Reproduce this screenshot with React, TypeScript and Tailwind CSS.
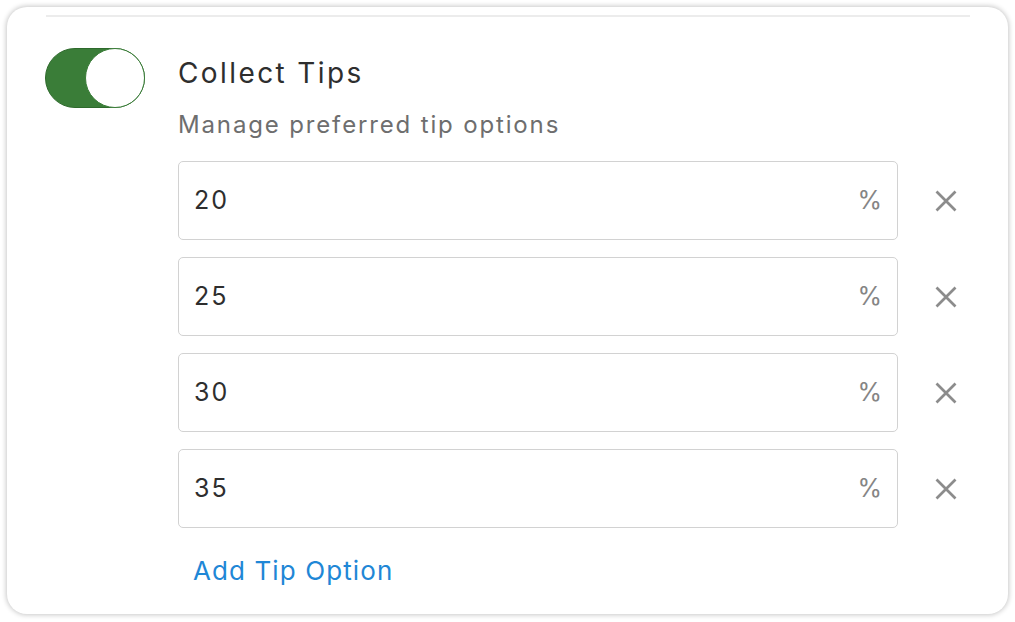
import React from "react";

const tips = ["20", "25", "30", "35"];

function CloseIcon() {
  return (
    <svg width="22" height="22" viewBox="0 0 22 22" fill="none" aria-hidden="true">
      <path d="M1.5 1.5 L20.5 20.5 M20.5 1.5 L1.5 20.5" stroke="#8c8c8c" strokeWidth="2.7" strokeLinecap="butt" />
    </svg>
  );
}

export default function App() {
  return (
    <div
      className="w-[1015px] h-[622px] bg-white pt-[7px] px-[7px]"
      style={{ fontFamily: "Inter, 'Open Sans', sans-serif" }}
    >
      <div className="h-[607px] w-[1001px] rounded-[20px] bg-white shadow-[0_0_5px_1px_rgba(0,0,0,0.22)] px-[38px] pt-[8px]">
        <div className="h-[2px] bg-[#ececec] ml-[1px]" />
        <div className="flex mt-[31px]">
          {/* toggle switch, on */}
          <div className="relative w-[100px] h-[60px] rounded-full bg-[#3a7d38] border border-[#2e6a2c] shrink-0">
            <div className="absolute right-[-1px] top-[-1px] w-[60px] h-[60px] rounded-full bg-white border-[1.5px] border-[#3a7d38]" />
          </div>
          <div className="ml-[33px] flex-1">
            <div className="h-[46px] flex items-center text-[28px] tracking-[2.4px] text-[#2e2e2e] leading-none mt-[2px]">
              Collect Tips
            </div>
            <div className="h-[26px] mt-[16px] flex items-center text-[24px] tracking-[1.85px] text-[#6e6e6e] leading-none">
              Manage preferred tip options
            </div>
            <div className="mt-[23px] flex flex-col gap-[17px]">
              {tips.map((t) => (
                <div key={t} className="flex items-center">
                  <div className="w-[720px] h-[79px] rounded-[5px] border border-[#d2d2d2] flex items-center justify-between pl-[15px] pr-[15px]">
                    <span className="text-[25px] tracking-[2px] text-[#2e2e2e] leading-none">{t}</span>
                    <span className="text-[25px] text-[#858585] leading-none">%</span>
                  </div>
                  <div className="ml-[37px]">
                    <CloseIcon />
                  </div>
                </div>
              ))}
            </div>
            <div className="mt-[30px] pl-[15px] text-[26px] tracking-[1.1px] text-[#1f87d6] leading-none">Add Tip Option</div>
          </div>
        </div>
      </div>
    </div>
  );
}
